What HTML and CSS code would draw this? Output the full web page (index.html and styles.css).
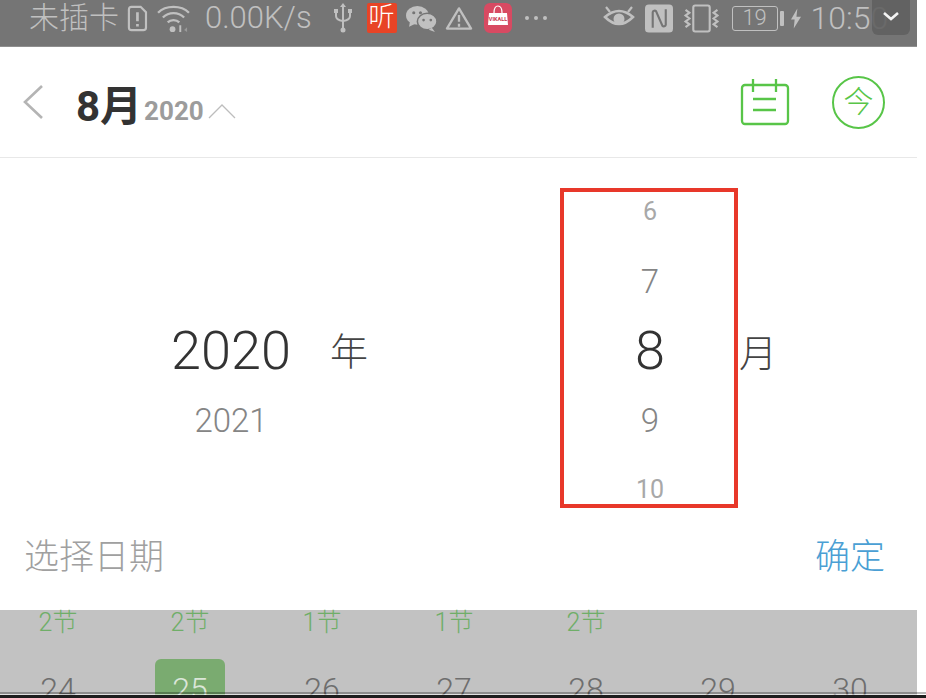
FILE: index.html
```html
<!DOCTYPE html>
<html lang="zh-CN">
<head>
  <meta charset="UTF-8"/>
  <meta name="viewport" content="width=device-width, initial-scale=1.0"/>
  <title>选择日期</title>
  <link rel="stylesheet" href="styles.css">
</head>
<body>

  <div class="page">

    <header class="status-bar">
      <span class="carrier">未插卡</span>
      <svg class="icon-sim" width="22" height="27" viewBox="0 0 24 30" fill="none" stroke="#c0c0c0" stroke-width="2.400">
        <path d="M3 5a3 3 0 0 1 3-3h10l6 6v17a3 3 0 0 1-3 3H6a3 3 0 0 1-3-3z"/>
        <path d="M12.500 8v10M12.500 21v3" stroke-width="3"/>
      </svg>
      <svg class="icon-wifi" width="33" height="29" viewBox="0 0 34 30" fill="none" stroke="#c0c0c0" stroke-width="2.400">
        <path d="M1 9C9 1 25 1 33 9"/>
        <path d="M6 14C12 8 22 8 28 14"/>
        <path d="M11 19C14 16 20 16 23 19"/>
        <circle cx="16" cy="26" r="3" fill="#c0c0c0" stroke="none"/>
        <path d="M24 22v7" stroke-width="2"/>
        <path d="M31 24v5l-3-2z" fill="#999" stroke="none"/>
      </svg>
      <span class="speed">0.00K/s</span>
      <svg class="icon-usb" width="18" height="30" viewBox="0 0 18 30" fill="none" stroke="#c0c0c0" stroke-width="2">
        <path d="M9 3v24"/>
        <path d="M2 9v4q0 4 7 5q7-1 7-5V9"/>
        <path d="M9 0l3 4H6z" fill="#c0c0c0" stroke="none"/>
        <circle cx="9" cy="27" r="2.500" fill="#c0c0c0" stroke="none"/>
        <rect x="0" y="6" width="4" height="4" fill="#c0c0c0" stroke="none"/>
        <rect x="14" y="6" width="4" height="4" fill="#c0c0c0" stroke="none"/>
      </svg>
      <span class="badge-ting">听</span>
      <svg class="icon-wechat" width="31" height="27" viewBox="0 0 30 26" fill="#c0c0c0">
        <ellipse cx="11" cy="10" rx="11" ry="9"/>
        <path d="M4 15l-1 6 6-3z"/>
        <ellipse cx="20.500" cy="16" rx="9.500" ry="8" stroke="#757575" stroke-width="1.500"/>
        <path d="M25 22l3 4-6-2z"/>
        <circle cx="7.500" cy="7.500" r="1.500" fill="#757575"/>
        <circle cx="14" cy="7.500" r="1.500" fill="#757575"/>
        <circle cx="17" cy="14.500" r="1.300" fill="#757575"/>
        <circle cx="24" cy="14.500" r="1.300" fill="#757575"/>
      </svg>
      <svg class="icon-warn" width="28" height="26" viewBox="0 0 29 26" fill="none" stroke="#c0c0c0" stroke-width="2.400">
        <path d="M14.500 3L27 24H2z" stroke-linejoin="round"/>
        <path d="M14.500 10v7M14.500 19v3"/>
      </svg>
      <span class="badge-shop">
        <svg width="28" height="30" viewBox="0 0 28 30" fill="none">
          <path d="M5 10h18l1 12H4z" fill="#fff"/>
          <path d="M10 10q0-7 4-7t4 7" stroke="#fff" stroke-width="1.200"/>
          <text x="14" y="18" font-size="5.500" font-weight="700" text-anchor="middle" fill="#c9374f">VIKALL</text>
        </svg>
      </span>
      <span class="dots"><i></i><i></i><i></i></span>

      <svg class="icon-eye" width="32" height="28" viewBox="0 0 32 28" fill="none" stroke="#c0c0c0" stroke-width="2.500">
        <path d="M2 13Q16 1 30 13Q16 27 2 13z"/>
        <circle cx="16" cy="15" r="5.500" fill="#c0c0c0" stroke="none"/>
        <path d="M3 3l4 5M29 3l-4 5" stroke-width="2.200"/>
      </svg>
      <svg class="icon-nfc" width="28" height="29" viewBox="0 0 29 29">
        <rect width="29" height="29" rx="4" fill="#c0c0c0"/>
        <path d="M8 24V8a2 2 0 0 1 3.500-1L18 22a2 2 0 0 0 3.500-1V5" fill="none" stroke="#757575" stroke-width="2.200"/>
      </svg>
      <svg class="icon-vibrate" width="37" height="29" viewBox="0 0 37 30" fill="none" stroke="#c0c0c0" stroke-width="2.200">
        <rect x="10" y="1.500" width="17" height="27" rx="2"/>
        <path d="M2 6l4 3-4 3 4 3-4 3 4 3-4 3M35 6l-4 3 4 3-4 3 4 3-4 3 4 3"/>
      </svg>
      <div class="battery">19</div>
      <i class="battery-tip"></i>
      <svg class="icon-bolt" width="10" height="23" viewBox="0 0 11 22" fill="#c0c0c0">
        <path d="M7 0L0 12h4l-1 10 8-13H6z"/>
      </svg>
      <span class="clock">10:50</span>

      <div class="drop-toggle">
        <svg width="18" height="11" viewBox="0 0 18 11" fill="none" stroke="#f4f4f4" stroke-width="2.600">
          <path d="M2 2l7 6 7-6"/>
        </svg>
      </div>
    </header>

    <nav class="title-bar">
      <svg class="back" width="22" height="36" viewBox="0 0 22 36" fill="none" stroke="#b4b4b4" stroke-width="2.600">
        <path d="M20 2L3 18l17 16"/>
      </svg>
      <div class="month-title">8月</div>
      <div class="year-title">2020</div>
      <svg class="caret" width="28" height="16" viewBox="0 0 28 16" fill="none" stroke="#bdbdbd" stroke-width="1.300">
        <path d="M1 15L14 2l13 13"/>
      </svg>
      <div class="title-actions">
        <svg class="icon-calendar" width="50" height="48" viewBox="0 0 50 48" fill="none" stroke="#58c548" stroke-width="2.300">
          <rect x="2" y="7" width="46" height="39" rx="3"/>
          <path d="M13 1v13M36 1v13M13 21h23M13 32h23"/>
        </svg>
        <div class="today">今</div>
      </div>
    </nav>

    <main class="picker">
      <div class="wheels">
        <div class="wheel wheel-year">
          <div class="cell"></div>
          <div class="cell"></div>
          <div class="cell current">2020</div>
          <div class="cell near">2021</div>
          <div class="cell"></div>
        </div>
        <div class="unit unit-year">年</div>
        <div class="wheel wheel-month">
          <div class="cell far">6</div>
          <div class="cell near">7</div>
          <div class="cell current">8</div>
          <div class="cell near">9</div>
          <div class="cell far">10</div>
        </div>
        <div class="unit unit-month">月</div>
      </div>
      <div class="picker-foot">
        <span class="foot-label">选择日期</span>
        <span class="foot-ok">确定</span>
      </div>
    </main>

    <section class="calendar">
      <div class="cal-row cal-counts">
        <span>2节</span><span>2节</span><span>1节</span><span>1节</span><span>2节</span><span></span><span></span>
      </div>
      <div class="cal-row cal-days">
        <span>24</span><span class="selected">25</span><span>26</span><span>27</span><span>28</span><span>29</span><span>30</span>
      </div>
    </section>
  </div>

  <div class="highlight"></div>
  <div class="screen-edge"></div>

</body>
</html>
```

FILE: styles.css
```css
html, body {
  margin: 0;
  height: 100%;
  overflow: hidden;
  background: #fff;
}

body {
  position: relative;
  font-family: Roboto, "Noto Sans CJK SC", sans-serif;
}

.page {
  width: 917px;
  height: 698px;
  display: flex;
  flex-direction: column;
  overflow: hidden;
}

/* status bar */
.status-bar {
  position: relative;
  flex: none;
  height: 47px;
  box-sizing: border-box;
  padding: 0 0 10px 29px;
  background: #757575;
  border-bottom: 1px solid #8f8f8f;
  color: #c0c0c0;
  display: flex;
  align-items: center;
  white-space: nowrap;
  overflow: hidden;
}

.status-bar svg { flex: none; }

.carrier {
  font-size: 30px;
  font-weight: 300;
  line-height: 34px;
}

.icon-sim { margin-left: 7px; }
.icon-wifi { margin-left: 9px; }

.speed {
  margin-left: 15px;
  font-size: 31px;
  font-weight: 300;
  line-height: 34px;
}

.icon-usb { margin-left: 22px; }

.badge-ting {
  margin-left: 15px;
  width: 30px;
  height: 30px;
  border-radius: 2px;
  background: #e84426;
  color: #fff;
  font-size: 26px;
  font-weight: 300;
  line-height: 29px;
  text-align: center;
}

.icon-wechat { margin-left: 9px; }
.icon-warn { margin-left: 8px; }

.badge-shop {
  margin-left: 11px;
  width: 28px;
  height: 30px;
  border-radius: 6px;
  background: #d84a62;
}

.badge-shop svg { display: block; }

.dots {
  margin-left: 13px;
  display: flex;
  gap: 5px;
}

.dots i {
  width: 4px;
  height: 4px;
  border-radius: 50%;
  background: #c0c0c0;
}

.icon-eye { margin-left: 56px; }
.icon-nfc { margin-left: 10px; }
.icon-vibrate { margin-left: 10px; }

.battery {
  margin-left: 12px;
  width: 46px;
  height: 25px;
  box-sizing: border-box;
  border: 1.500px solid #c0c0c0;
  border-radius: 3px;
  font-size: 22px;
  font-weight: 300;
  line-height: 22px;
  text-align: center;
}

.battery-tip {
  margin-left: 2px;
  width: 4px;
  height: 15px;
  border-radius: 1px;
  background: #c0c0c0;
}

.icon-bolt { margin-left: 7px; }

.clock {
  margin-left: 10px;
  font-size: 32px;
  font-weight: 300;
  line-height: 34px;
}

.drop-toggle {
  position: absolute;
  right: 7px;
  top: 0;
  width: 38px;
  height: 35px;
  border-radius: 0 0 6px 6px;
  background: rgba(96, 96, 96, 0.9);
  display: flex;
  justify-content: center;
  padding-top: 11px;
  box-sizing: border-box;
}

.drop-toggle svg { display: block; }

/* title bar */
.title-bar {
  flex: none;
  height: 111px;
  box-sizing: border-box;
  padding: 0 32px 0 22px;
  border-bottom: 1px solid #e8e8e8;
  display: flex;
  align-items: center;
}

.back { margin-right: 32px; }

.month-title {
  font-size: 42px;
  font-weight: 700;
  color: #333;
  white-space: nowrap;
}

.year-title {
  margin: 18px 4px 0 2px;
  font-size: 26px;
  font-weight: 700;
  color: #9c9c9c;
}

.caret { margin-top: 18px; }

.title-actions {
  margin-left: auto;
  display: flex;
  align-items: center;
  gap: 42px;
}

.icon-calendar { display: block; }

.today {
  width: 53px;
  height: 53px;
  box-sizing: border-box;
  border: 2px solid #58c548;
  border-radius: 50%;
  color: #58c548;
  font-size: 30px;
  font-weight: 300;
  line-height: 47px;
  text-align: center;
}

/* date wheels */
.picker {
  flex: none;
  height: 452px;
  display: flex;
  flex-direction: column;
}

.wheels {
  padding: 19px 0 0 172px;
  display: grid;
  grid-template-columns: 118px 118px 153px 178px auto;
}

.wheel {
  grid-row: 1;
  display: flex;
  flex-direction: column;
  align-items: center;
}

.wheel-year { grid-column: 1; }
.wheel-month { grid-column: 4; }

.cell {
  height: 69.500px;
  flex: none;
  display: flex;
  align-items: center;
  justify-content: center;
  font-weight: 300;
  white-space: nowrap;
}

.cell.current { font-size: 54px; color: #333; }
.cell.near { font-size: 33px; color: #858585; }
.cell.far { font-size: 25px; font-weight: 400; color: #a8a8a8; }

.unit {
  grid-row: 1;
  align-self: center;
  font-size: 38px;
  font-weight: 300;
  color: #444;
}

.unit-year { grid-column: 2; text-align: center; padding-bottom: 4px; }
.unit-month { grid-column: 5; }

.picker-foot {
  margin-top: 3px;
  padding: 0 32px 0 24px;
  display: flex;
  justify-content: space-between;
  align-items: center;
}

.foot-label {
  font-size: 35px;
  font-weight: 300;
  color: #a0a0a0;
}

.foot-ok {
  font-size: 35px;
  font-weight: 300;
  color: #4a9fd4;
}

/* dimmed calendar behind the picker */
.calendar {
  flex: 1;
  min-height: 0;
  background: #c2c2c2;
}

.cal-row {
  margin-left: -8px;
  display: grid;
  grid-template-columns: repeat(7, 132px);
  text-align: center;
}

.cal-counts {
  height: 49px;
  font-size: 25px;
  line-height: 26px;
  font-weight: 300;
  color: #6fae68;
}

.cal-days {
  font-size: 32px;
  font-weight: 300;
  color: #6e6e6e;
}

.cal-days span {
  line-height: 36px;
  padding-top: 12px;
}

.cal-days .selected {
  justify-self: center;
  width: 70px;
  border-radius: 6px 6px 0 0;
  background: #7aab70;
  color: #dbe6d8;
}

/* annotation drawn over the screenshot */
.highlight {
  position: absolute;
  left: 560px;
  top: 188px;
  width: 178px;
  height: 320px;
  box-sizing: border-box;
  border: 4px solid #e8382a;
}

.screen-edge {
  position: absolute;
  left: 0;
  right: 0;
  bottom: 0;
  height: 6px;
  background: linear-gradient(rgba(0, 0, 0, 0.28) 0 2px, rgba(255, 255, 255, 0.5) 2px 3px, #1d1d1d 3px);
}
```
